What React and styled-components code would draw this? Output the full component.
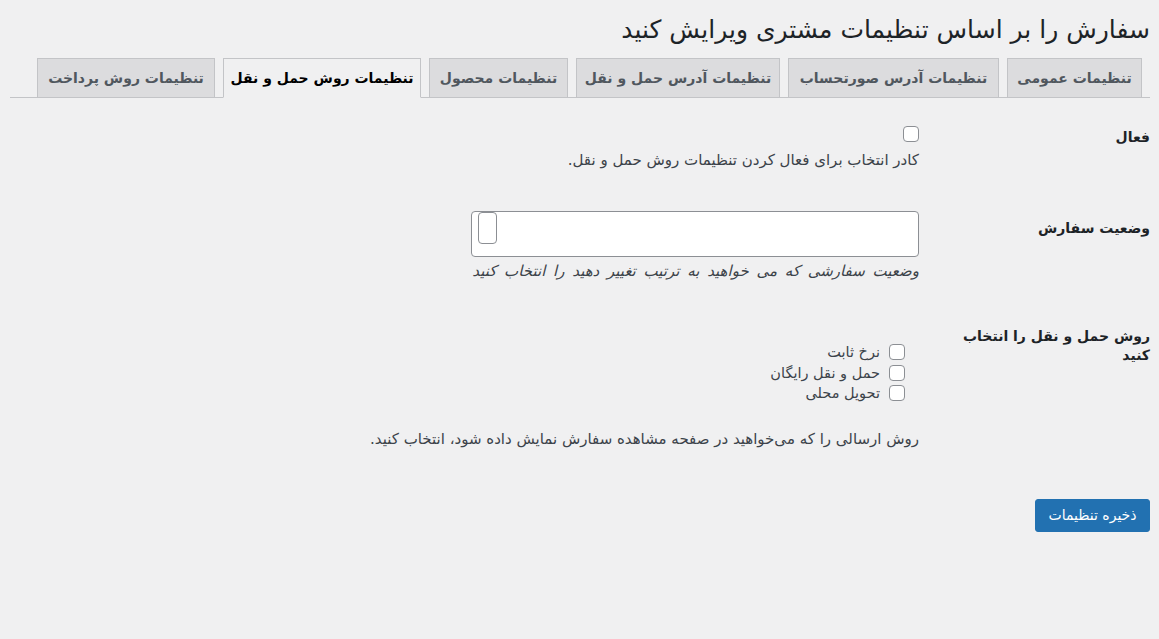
import React from "react";
import styled, { createGlobalStyle } from "styled-components";

const GlobalStyle = createGlobalStyle`
  html, body { margin: 0; padding: 0; }
  body {
    background: #f0f0f1;
    font-family: "DejaVu Sans", "Noto Sans", sans-serif;
    color: #3c434a;
    font-size: 13px;
  }
  * { box-sizing: border-box; }
`;

const Wrap = styled.div`
  direction: rtl;
  padding: 0 9px 0 10px;
  min-height: 639px;
`;

const Title = styled.h1`
  margin: 0;
  padding: 15px 0 0;
  font-size: 25px;
  line-height: 30px;
  font-weight: 400;
  color: #1d2327;
`;

const NavWrapper = styled.nav`
  display: flex;
  gap: 8px;
  margin-top: 13px;
  padding-right: 8px;
  border-bottom: 1px solid #c3c4c7;
  height: 40px;
`;

const Tab = styled.a`
  display: flex;
  align-items: center;
  justify-content: center;
  width: ${(p) => p.$w}px;
  height: 40px;
  border: 1px solid #c3c4c7;
  background: ${(p) => (p.$active ? "#f0f0f1" : "#dcdcde")};
  border-bottom-color: ${(p) => (p.$active ? "#f0f0f1" : "#c3c4c7")};
  color: ${(p) => (p.$active ? "#000" : "#50575e")};
  font-size: 14px;
  font-weight: 600;
  white-space: nowrap;
  text-decoration: none;
  cursor: pointer;
`;

const Form = styled.form`
  display: flex;
  flex-direction: column;
`;

const Row = styled.div`
  display: grid;
  grid-template-columns: 231px 1fr;
  align-items: start;
  margin-top: ${(p) => p.$mt}px;
`;

const Th = styled.div`
  padding-top: ${(p) => p.$pt || 0}px;
  max-width: 190px;
  font-size: 14px;
  font-weight: 700;
  line-height: 19px;
  color: #1d2327;
`;

const Td = styled.div`
  display: flex;
  flex-direction: column;
  align-items: flex-start;
`;

const Checkbox = styled.input.attrs({ type: "checkbox" })`
  appearance: none;
  -webkit-appearance: none;
  margin: 0;
  width: 16px;
  height: 16px;
  border: 1px solid #8c8f94;
  border-radius: 4px;
  background: #fff;
  flex: none;
`;

const Description = styled.p`
  margin: ${(p) => p.$mt}px 0 0;
  font-size: 15px;
  line-height: 20px;
  color: #3c434a;
  font-style: ${(p) => (p.$italic ? "italic" : "normal")};
  word-spacing: ${(p) => (p.$italic ? "3px" : "0")};
`;

const SelectBox = styled.div`
  width: 448px;
  height: 46px;
  background: #fff;
  border: 1px solid #8c8f94;
  border-radius: 4px;
  display: flex;
  justify-content: flex-end;
  align-items: flex-start;
  padding-left: 6px;
`;

const SearchField = styled.span`
  width: 19px;
  height: 32px;
  border: 1px solid #8c8f94;
  border-radius: 4px;
  background: #fff;
`;

const OptionList = styled.ul`
  list-style: none;
  margin: 0;
  padding: 15px 14px 0 0;
`;

const OptionItem = styled.li`
  display: flex;
  align-items: center;
  gap: 9px;
  height: 20.5px;
  font-size: 14.5px;
  color: #3c434a;
`;

const Submit = styled.div`
  margin-top: 50px;
  display: flex;
`;

const Button = styled.button`
  width: 115px;
  height: 33px;
  background: #2271b1;
  border: 1px solid #2271b1;
  border-radius: 3px;
  color: #fff;
  font-family: inherit;
  font-size: 14px;
  cursor: pointer;
`;

const tabs = [
  { label: "تنظیمات عمومی", w: 135 },
  { label: "تنظیمات آدرس صورتحساب", w: 211 },
  { label: "تنظیمات آدرس حمل و نقل", w: 204 },
  { label: "تنظیمات محصول", w: 139 },
  { label: "تنظیمات روش حمل و نقل", w: 198, active: true },
  { label: "تنظیمات روش پرداخت", w: 178 },
];

const methods = ["نرخ ثابت", "حمل و نقل رایگان", "تحویل محلی"];

export default function App() {
  return (
    <>
      <GlobalStyle />
      <Wrap dir="rtl">
        <Title>سفارش را بر اساس تنظیمات مشتری ویرایش کنید</Title>
        <NavWrapper>
          {tabs.map((t) => (
            <Tab key={t.label} $w={t.w} $active={t.active}>
              {t.label}
            </Tab>
          ))}
        </NavWrapper>
        <Form onSubmit={(e) => e.preventDefault()}>
          <Row $mt={28}>
            <Th $pt={2}>فعال</Th>
            <Td>
              <Checkbox />
              <Description $mt={8}>
                کادر انتخاب برای فعال کردن تنظیمات روش حمل و نقل.
              </Description>
            </Td>
          </Row>
          <Row $mt={41}>
            <Th $pt={8}>وضعیت سفارش</Th>
            <Td>
              <SelectBox>
                <SearchField />
              </SelectBox>
              <Description $mt={4} $italic>
                وضعیت سفارشی که می خواهید به ترتیب تغییر دهید را انتخاب کنید
              </Description>
            </Td>
          </Row>
          <Row $mt={46}>
            <Th>روش حمل و نقل را انتخاب کنید</Th>
            <Td>
              <OptionList>
                {methods.map((m) => (
                  <OptionItem key={m}>
                    <Checkbox />
                    <span>{m}</span>
                  </OptionItem>
                ))}
              </OptionList>
              <Description $mt={25}>
                روش ارسالی را که می‌خواهید در صفحه مشاهده سفارش نمایش داده شود، انتخاب کنید.
              </Description>
            </Td>
          </Row>
          <Submit>
            <Button type="submit">ذخیره تنظیمات</Button>
          </Submit>
        </Form>
      </Wrap>
    </>
  );
}
